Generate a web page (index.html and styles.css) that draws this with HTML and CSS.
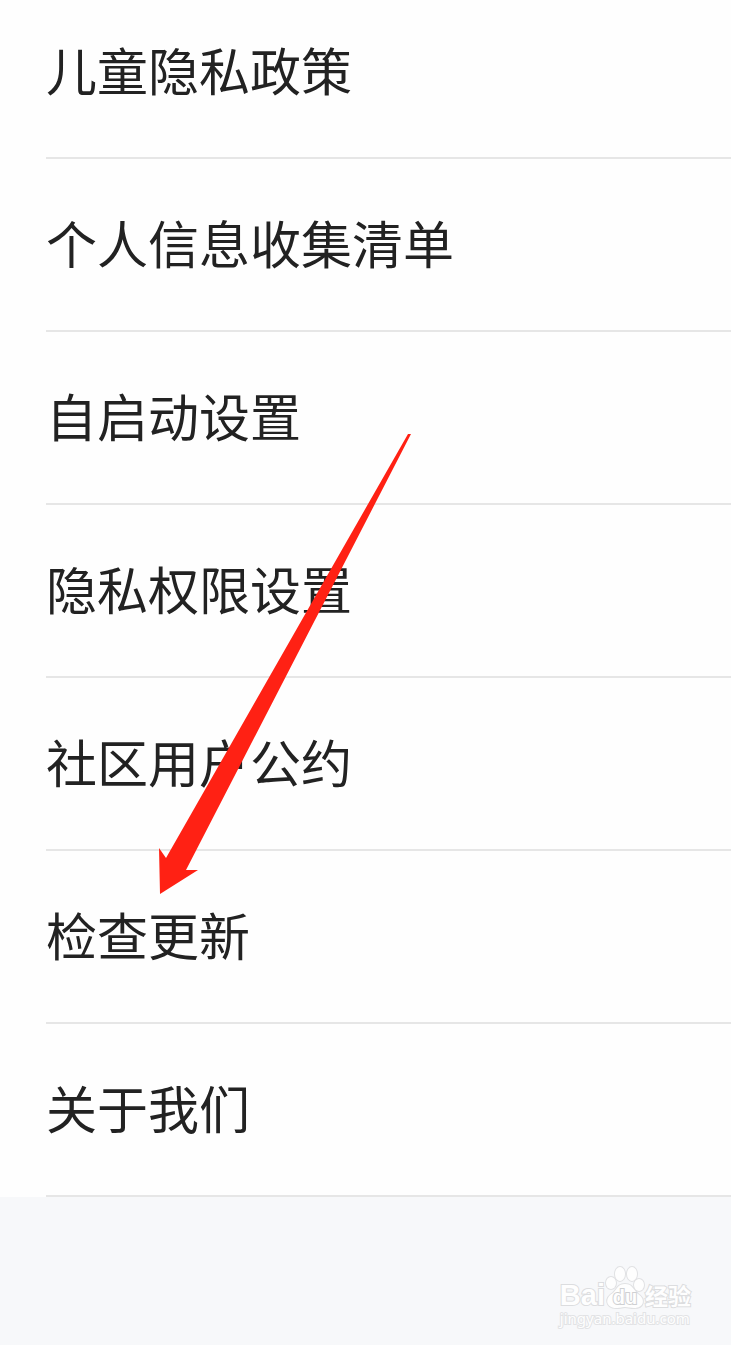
FILE: index.html
```html
<!DOCTYPE html>
<html lang="zh-CN">
<head>
  <meta charset="UTF-8" />
  <meta name="viewport" content="width=device-width, initial-scale=1.0"/>
  <title>设置</title>
  <link rel="stylesheet" href="styles.css">
</head>
<body>
  <main class="page">
    <nav class="settings">
      <a class="item" href="#children">儿童隐私政策</a>
      <a class="item" href="#collect">个人信息收集清单</a>
      <a class="item" href="#autostart">自启动设置</a>
      <a class="item" href="#permission">隐私权限设置</a>
      <a class="item" href="#community">社区用户公约</a>
      <a class="item" href="#update">检查更新</a>
      <a class="item" href="#about">关于我们</a>
    </nav>

    <footer class="footer">
      <div class="watermark">
        <div class="brand">
          <span class="brand-name">Bai</span>
          <span class="paw">
            <svg width="40" height="43" viewBox="0 0 40 43">
              <ellipse cx="6" cy="17" rx="5" ry="6"/>
              <ellipse cx="15" cy="8" rx="5" ry="7"/>
              <ellipse cx="27" cy="8" rx="5" ry="7"/>
              <ellipse cx="34" cy="19" rx="5" ry="6"/>
              <path d="M20 18C13 18 12 23 8 27C-1 32 1 42 11 42C16 42 17 41 20 41C23 41 25 42 29 42C39 42 41 33 33 28C28 23 27 18 20 18Z"/>
            </svg>
            <span class="paw-text">du</span>
          </span>
          <span class="brand-cn">经验</span>
        </div>
        <div class="site">jingyan.baidu.com</div>
      </div>
    </footer>

    <!-- arrow pointing at the update entry -->
    <svg class="arrow" width="252" height="461" viewBox="0 0 252 461">
      <path d="M249 1L252 1L27 437L39 437L1 461L0 415L7 425Z"/>
    </svg>
  </main>
</body>
</html>
```

FILE: styles.css
```css
body {
  margin: 0;
  background: #f7f8fa;
  color: #222;
  font-family: "Noto Sans CJK SC", sans-serif;
}
.page {
  position: relative;
  display: flex;
  flex-direction: column;
  min-height: 100vh;
}
.settings {
  padding-left: 46px;
  background: #fefefe;
}
.item {
  display: block;
  padding: 46px 0 50px;
  border-bottom: 2px solid #e6e6e6;
  color: #222;
  font-size: 51px;
  line-height: 75px;
  text-decoration: none;
}
.item:first-child {
  padding-top: 32px;
}
.footer {
  flex: 1;
  display: flex;
  justify-content: flex-end;
  align-items: flex-end;
  padding: 0 40px 18px;
}
.watermark {
  color: #fefefe;
  -webkit-text-stroke: 2px #dcdddf;
  paint-order: stroke fill;
}
.brand {
  display: flex;
  align-items: flex-end;
  line-height: 24px;
}
.brand-name {
  padding-bottom: 2px;
  font-family: "Liberation Sans", sans-serif;
  font-size: 29px;
  font-weight: bold;
}
.paw {
  position: relative;
  height: 43px;
}
.paw svg {
  display: block;
  fill: #fefefe;
  stroke: #e0e1e3;
  stroke-width: 2;
  overflow: visible;
}
.paw-text {
  position: absolute;
  left: 0;
  right: 0;
  bottom: 0;
  text-align: center;
  font-family: "Liberation Sans", sans-serif;
  font-size: 20px;
  font-weight: bold;
  -webkit-text-stroke-color: #cfd0d2;
}
.brand-cn {
  padding-bottom: 2px;
  font-size: 23px;
  line-height: 23px;
  font-weight: bold;
}
.site {
  font-family: "Noto Sans", sans-serif;
  font-size: 15px;
  line-height: 18px;
  -webkit-text-stroke-color: #e2e3e5;
}
.arrow {
  position: absolute;
  left: 159px;
  top: 433px;
  fill: #ff2114;
}
```
